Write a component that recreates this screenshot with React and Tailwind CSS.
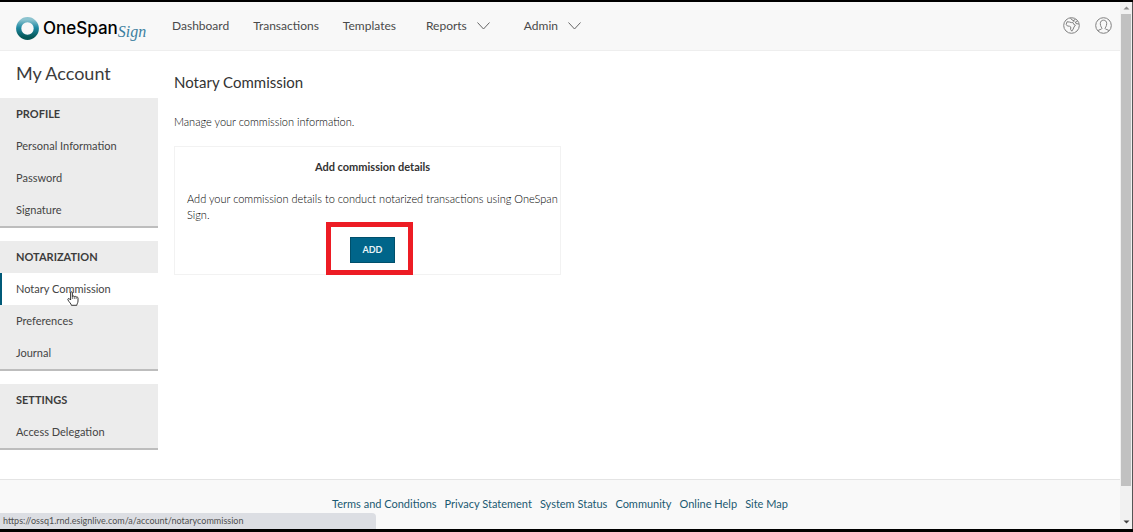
import React from "react";

const menus = [
  { title: "PROFILE", items: ["Personal Information", "Password", "Signature"] },
  { title: "NOTARIZATION", items: ["Notary Commission", "Preferences", "Journal"] },
  { title: "SETTINGS", items: ["Access Delegation"] },
];

const footerLinks = [
  "Terms and Conditions",
  "Privacy Statement",
  "System Status",
  "Community",
  "Online Help",
  "Site Map",
];

function Chevron() {
  return (
    <svg width="13" height="8" viewBox="0 0 13 8" fill="none" stroke="#666666" strokeWidth="1" aria-hidden="true">
      <path d="M0.5 0.5 L6.5 7 L12.5 0.5" />
    </svg>
  );
}

function Logo() {
  return (
    <a href="#home" className="flex items-center gap-1 text-black" aria-label="OneSpan Sign">
      <svg width="23" height="23" viewBox="0 0 23 23" aria-hidden="true">
        <defs>
          <linearGradient id="ring" x1="0" y1="0" x2="0" y2="1">
            <stop offset="0" stopColor="#8cc3cf" />
            <stop offset="0.45" stopColor="#1f8aa3" />
            <stop offset="1" stopColor="#055757" />
          </linearGradient>
        </defs>
        <circle cx="11.5" cy="11.5" r="8.8" fill="none" stroke="url(#ring)" strokeWidth="5.2" />
      </svg>
      <span className="flex items-end">
        <span className="font-[Inter] text-[17px] leading-6 font-medium">OneSpan</span>
        <span className="relative top-1 font-['Liberation_Serif'] text-base leading-6 text-[#3c7fa0] italic">Sign</span>
      </span>
    </a>
  );
}

function GlobeIcon() {
  return (
    <svg width="17" height="17" viewBox="0 0 17 17" fill="none" stroke="#808080" strokeWidth="1" aria-hidden="true">
      <circle cx="8.5" cy="8.5" r="7.8" />
      <path d="M4 4.8 L6.4 5 L8.4 5.6 L9.8 5.4 L10.8 7.4 L12.4 8.2 L11 10 L10.2 12 L8.8 14.2 L7.6 12.4 L7.8 10 L6.4 9.2 L4.4 9 L3.2 7.4 Z" />
      <path d="M7.4 0.8 L9 3 L11 3.6 L10.8 5 M11 3.6 L12.2 2 M12.4 5 L14.4 4.4 M12.4 5 L13 6.6 L15.8 7" />
    </svg>
  );
}

function UserIcon() {
  return (
    <svg width="17" height="17" viewBox="0 0 17 17" fill="none" stroke="#808080" strokeWidth="1" aria-hidden="true">
      <circle cx="8.5" cy="8.5" r="7.8" />
      <path d="M3 13.8 C3.6 12.5 6.8 12.6 6.9 11.6 C7 10.8 5.3 9.4 5.3 6.6 C5.3 4.4 6.6 3.2 8.5 3.2 C10.4 3.2 11.7 4.4 11.7 6.6 C11.7 9.4 10 10.8 10.1 11.6 C10.2 12.6 13.4 12.5 14 13.8" />
    </svg>
  );
}

function HandCursor() {
  return (
    <svg className="absolute top-[18px] left-[65px]" width="12" height="15" viewBox="0 0 12 15" aria-hidden="true">
      <path
        d="M3.6 9 V1.8 C3.6 0.4 5.4 0.4 5.4 1.8 V5.6 C5.6 4.6 7.2 4.7 7.3 5.8 C7.6 5 9 5.2 9.1 6.2 C9.6 5.6 11 5.8 11 7.2 V10 C11 12 10 12.6 9.8 14.3 H4.4 C4.2 12.6 2.2 11.4 0.9 8.8 C0.5 7.6 1.8 7 2.6 7.9 Z"
        fill="#ffffff"
        stroke="#222222"
        strokeWidth="0.9"
        strokeLinejoin="round"
      />
      <path d="M5.4 5.6 V8 M7.3 5.8 V8 M9.1 6.4 V8" stroke="#222222" strokeWidth="0.6" />
    </svg>
  );
}

function Header() {
  return (
    <header className="flex h-[49px] items-center border-b border-[#eeeeee] bg-[#f8f8f8] pr-2 pl-4">
      <div className="w-[156px] pt-1">
        <Logo />
      </div>
      <nav className="flex flex-1 items-center text-xs leading-4 text-[#4a4a4a]">
        <a href="#dashboard" className="mr-6">Dashboard</a>
        <a href="#transactions" className="mr-6">Transactions</a>
        <a href="#templates" className="mr-[30px]">Templates</a>
        <button type="button" className="mr-[34px] flex items-center gap-[10px]">
          Reports <Chevron />
        </button>
        <button type="button" className="flex items-center gap-[10px]">
          Admin <Chevron />
        </button>
      </nav>
      <div className="flex items-center gap-[15px] pb-0.5">
        <button type="button" aria-label="Language"><GlobeIcon /></button>
        <button type="button" aria-label="User"><UserIcon /></button>
      </div>
    </header>
  );
}

function Sidebar() {
  return (
    <aside className="w-[158px] shrink-0">
      <h1 className="px-4 pt-[10px] pb-[13px] text-lg leading-6 text-[#3c3c3c]">My Account</h1>
      <div className="flex flex-col gap-[13px]">
        {menus.map((menu) => (
          <nav key={menu.title} aria-label={menu.title} className="border-b-2 border-[#bdbdbd] bg-[#ececec] text-[11px] text-[#444444]">
            <h2 className="flex h-8 items-center px-4 font-bold text-[#3c3c3c]">{menu.title}</h2>
            {menu.items.map((item) =>
              item === "Notary Commission" ? (
                <a key={item} href="#commission" aria-current="page" className="relative flex h-8 items-center border-l-2 border-[#005a78] bg-white pr-4 pl-[14px]">
                  {item}
                  <HandCursor />
                </a>
              ) : (
                <a key={item} href="#item" className="flex h-8 items-center px-4">
                  {item}
                </a>
              )
            )}
          </nav>
        ))}
      </div>
    </aside>
  );
}

function Commission() {
  return (
    <main className="flex-1 px-4 pt-[19px] text-[11px] leading-4 text-[#333333]">
      <h2 className="text-[15px] leading-6">Notary Commission</h2>
      <p className="mt-5 font-light text-black">Manage your commission information.</p>
      <section className="mt-4 flex w-[387px] max-w-full flex-col border border-[#f2f2f2] pt-3 pr-0.5 pb-[11px] pl-3">
        <h3 className="text-center font-bold">Add commission details</h3>
        <p className="mt-4 font-light text-black">
          Add your commission details to conduct notarized transactions using OneSpan Sign.
        </p>
        <div className="relative mt-[14px] flex justify-center">
          <button type="button" className="h-[26px] w-[45px] border border-[#004f6b] bg-[#00658a] text-[9px] font-bold text-[#e8f4f8]">
            ADD
          </button>
          <div className="pointer-events-none absolute -top-[15px] left-[139px] h-[53px] w-[87px] border-5 border-[#ed1c24]" />
        </div>
      </section>
    </main>
  );
}

function Scrollbar() {
  return (
    <div className="flex w-[13px] shrink-0 flex-col items-center border-r border-[#555555] bg-[#f1f1f1]" aria-hidden="true">
      <svg width="11" height="12" viewBox="0 0 11 12">
        <path d="M2.5 7.5 L5.5 4.5 L8.5 7.5 Z" fill="#8a8a8a" />
      </svg>
      <div className="w-[10px] flex-1 bg-[#c1c1c1]" />
      <div className="h-[30px]" />
      <svg width="11" height="13" viewBox="0 0 11 13">
        <path d="M2.5 4.5 L5.5 7.5 L8.5 4.5 Z" fill="#404040" />
      </svg>
    </div>
  );
}

export default function App() {
  return (
    <div className="relative flex min-h-screen border-t-2 border-b-3 border-black bg-white font-[Lato,sans-serif]">
      <div className="flex min-w-0 flex-1 flex-col">
        <Header />
        <div className="flex flex-1">
          <Sidebar />
          <Commission />
        </div>
        <footer className="flex h-[50px] items-center justify-center gap-2 border-t border-[#e4e4e4] bg-[#f9f9f9] text-[11px] text-[#1b5972]">
          {footerLinks.map((link) => (
            <a key={link} href="#footer">{link}</a>
          ))}
        </footer>
      </div>
      <Scrollbar />
      <div className="absolute bottom-0 left-0 h-4 w-[376px] rounded-tr-sm bg-[#dcdee3] px-[3px] text-[9px] leading-4 text-[#505050]">
        https://ossq1.rnd.esignlive.com/a/account/notarycommission
      </div>
    </div>
  );
}
